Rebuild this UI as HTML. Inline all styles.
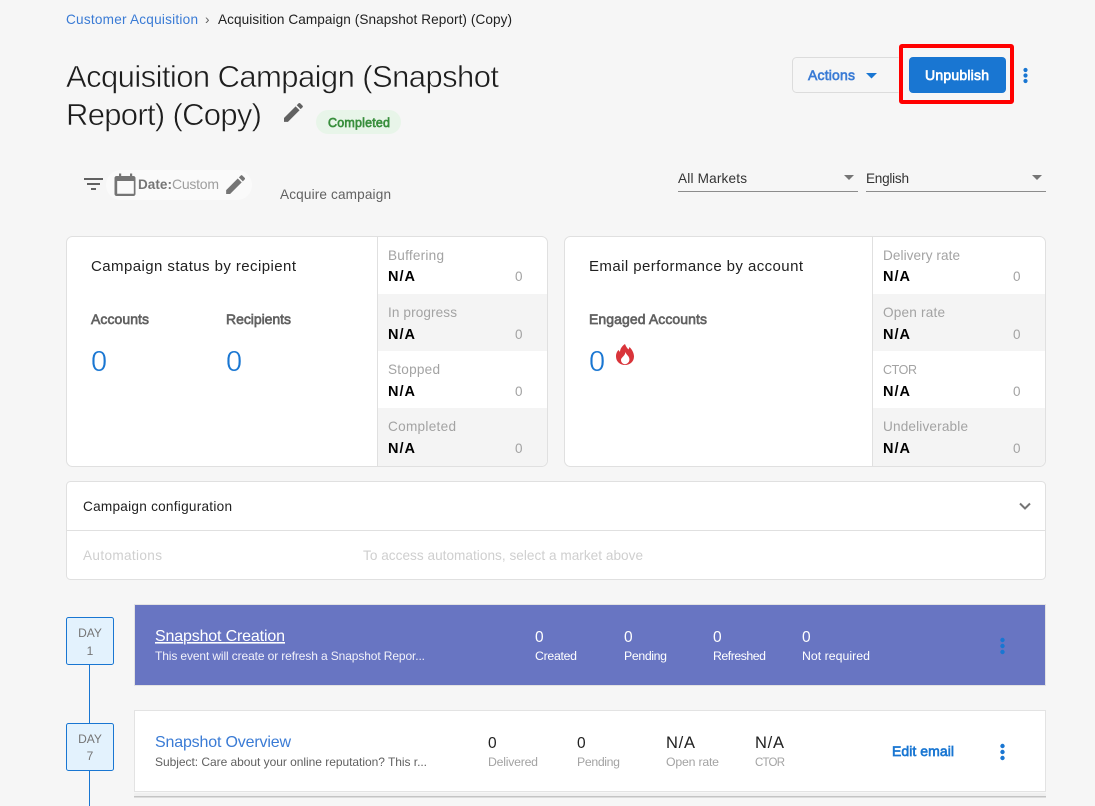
<!DOCTYPE html>
<html lang="en">
<head>
<meta charset="utf-8">
<title>Acquisition Campaign (Snapshot Report) (Copy)</title>
<style>
html,body{margin:0;padding:0;width:1095px;height:806px;overflow:hidden;background:#f6f6f6}
svg{display:block}
text{font-family:"Liberation Sans",Arial,sans-serif;font-size:13.6px;white-space:pre}
.b{font-weight:700}
.semi{stroke-width:.65px}
.title{font-size:31px;fill:#1d1d1d;stroke:#f6f6f6;stroke-width:.55px}
.lab{fill:#a3a3a3;font-size:13.6px}
.na{fill:#000;font-weight:700;font-size:14.5px}
.zero{fill:#a3a3a3;font-size:13.5px}
.big{fill:#1976d2;font-size:29px;stroke:#fff;stroke-width:.4px}
.num{font-size:15.5px}
.sm{font-size:12.3px}
</style>
</head>
<body>
<svg width="1095" height="806" viewBox="0 0 1095 806" xmlns="http://www.w3.org/2000/svg">
<rect width="1095" height="806" fill="#f6f6f6"/>

<!-- breadcrumb -->
<text x="66" y="24" fill="#3a7bd5" textLength="132">Customer Acquisition</text>
<text x="205" y="24" fill="#616161">›</text>
<text x="218" y="24" fill="#212121" textLength="294">Acquisition Campaign (Snapshot Report) (Copy)</text>

<!-- title -->
<text x="66" y="87" class="title" textLength="433">Acquisition Campaign (Snapshot</text>
<text x="66" y="125" class="title" textLength="196">Report) (Copy)</text>
<path transform="translate(280.850 99.850) scale(1.050)" fill="#616161" d="M3 17.250V21h3.750L17.810 9.940l-3.750-3.750L3 17.250zM20.710 7.040c.39-.39.39-1.020 0-1.410l-2.340-2.340c-.39-.39-1.020-.39-1.410 0l-1.830 1.830 3.750 3.750 1.830-1.830z"/>
<rect x="316" y="110" width="85" height="24" rx="12" fill="#e8f5e9"/>
<text x="328" y="127" class="semi" fill="#388e3c" stroke="#388e3c" style="font-size:12.500px" textLength="62">Completed</text>

<!-- filter row -->
<rect x="84" y="178" width="19" height="2" fill="#616161"/>
<rect x="87" y="183" width="13" height="2" fill="#616161"/>
<rect x="91" y="188" width="5" height="2" fill="#616161"/>
<rect x="106" y="170" width="146" height="30" rx="15" fill="#fafafa"/>
<path fill="#757575" fill-rule="evenodd" d="M119 173.500h2.200v2.500h8.800v-2.500h2.200v2.500h1.300c1.100 0 2 .9 2 2V194c0 1.100-.9 2-2 2h-17c-1.100 0-2-.9-2-2v-16c0-1.100.9-2 2-2h2.500zM117.200 181v12.800h16.600V181z"/>
<text x="138" y="189" class="b" fill="#757575" style="font-size:13.500px" textLength="34">Date:</text>
<text x="172" y="189" fill="#9e9e9e" style="font-size:14px" textLength="47">Custom</text>
<path transform="translate(223 172) scale(1.050)" fill="#757575" d="M3 17.250V21h3.750L17.810 9.940l-3.750-3.750L3 17.250zM20.710 7.040c.39-.39.39-1.020 0-1.410l-2.340-2.340c-.39-.39-1.020-.39-1.410 0l-1.830 1.830 3.750 3.750 1.830-1.830z"/>
<text x="280" y="199" fill="#616161" textLength="111">Acquire campaign</text>

<!-- header actions -->
<path d="M898.500 57.500H796.500a4 4 0 0 0-4 4v27a4 4 0 0 0 4 4H898.500" fill="#f6f6f6" stroke="#dcdcdc"/>
<text x="808" y="80" class="semi" fill="#3a7bd5" stroke="#3a7bd5" style="font-size:14px" textLength="47">Actions</text>
<path d="M866 73h11l-5.500 5.500z" fill="#1976d2"/>
<rect x="901" y="46" width="111" height="56" fill="none" stroke="#ff0000" stroke-width="4" rx="1"/>
<rect x="909" y="57" width="97" height="36" rx="4" fill="#1976d2"/>
<text x="925" y="80" class="semi" fill="#fff" stroke="#fff" style="font-size:14px" textLength="64">Unpublish</text>
<circle cx="1025.500" cy="70" r="2.100" fill="#1976d2"/>
<circle cx="1025.500" cy="75.500" r="2.100" fill="#1976d2"/>
<circle cx="1025.500" cy="81" r="2.100" fill="#1976d2"/>

<!-- selects -->
<text x="678" y="183" fill="#333" textLength="69">All Markets</text>
<path d="M844 175h10l-5 5z" fill="#757575"/>
<rect x="678" y="191" width="180" height="1" fill="#8c8c8c"/>
<text x="866" y="183" fill="#333" textLength="43">English</text>
<path d="M1032 175h10l-5 5z" fill="#757575"/>
<rect x="866" y="191" width="180" height="1" fill="#8c8c8c"/>

<!-- card 1 -->
<rect x="66.500" y="236.500" width="481" height="230" rx="6" fill="#fff" stroke="#e0e0e0"/>
<rect x="378" y="294" width="169" height="57" fill="#f4f4f4"/>
<path d="M378 408h169v52a6 6 0 0 1-6 6H378z" fill="#f4f4f4"/>
<rect x="377" y="237" width="1" height="229" fill="#e0e0e0"/>
<text x="91" y="271" fill="#212121" style="font-size:15px" textLength="205">Campaign status by recipient</text>
<text x="91" y="324" class="semi" fill="#616161" stroke="#616161" style="font-size:14px" textLength="58">Accounts</text>
<text x="226" y="324" class="semi" fill="#616161" stroke="#616161" style="font-size:14px" textLength="65">Recipients</text>
<text x="91" y="371" class="big">0</text>
<text x="226" y="371" class="big">0</text>

<text x="388" y="260" class="lab" textLength="56">Buffering</text>
<text x="388" y="281" class="na" textLength="27">N/A</text>
<text x="515" y="281" class="zero">0</text>
<text x="388" y="317" class="lab" textLength="69">In progress</text>
<text x="388" y="339" class="na" textLength="27">N/A</text>
<text x="515" y="339" class="zero">0</text>
<text x="388" y="374" class="lab" textLength="52">Stopped</text>
<text x="388" y="396" class="na" textLength="27">N/A</text>
<text x="515" y="396" class="zero">0</text>
<text x="388" y="431" class="lab" textLength="68">Completed</text>
<text x="388" y="453" class="na" textLength="27">N/A</text>
<text x="515" y="453" class="zero">0</text>

<!-- card 2 -->
<rect x="564.500" y="236.500" width="481" height="230" rx="6" fill="#fff" stroke="#e0e0e0"/>
<rect x="873" y="294" width="172" height="57" fill="#f4f4f4"/>
<path d="M873 408h172v52a6 6 0 0 1-6 6H873z" fill="#f4f4f4"/>
<rect x="872" y="237" width="1" height="229" fill="#e0e0e0"/>
<text x="589" y="271" fill="#212121" style="font-size:15px" textLength="214">Email performance by account</text>
<text x="589" y="324" class="semi" fill="#616161" stroke="#616161" style="font-size:14px" textLength="118">Engaged Accounts</text>
<text x="589" y="371" class="big">0</text>
<path fill="#d9343a" d="M625 344c1 2.500 2 4 3.500 5.500l1-2.500c2.500 2.500 4.500 6 4.500 9.500 0 5-4 8.500-9 8.500s-9-3.500-9-8.500c0-3 1-5 2.500-6.500l1.500 2c0-3 2-6 5-8z"/>
<path fill="#fff" d="M625.500 352c.5 2 2 3 3 4.500 1 1.500 1.200 3.500.5 5-.8 1.500-2.500 2.700-4 2.700-2 0-4-1.700-4-4.200 0-2 2-3 3-4.500.8-1 1.200-2 1.500-3.500z"/>

<text x="883" y="260" class="lab" textLength="77">Delivery rate</text>
<text x="883" y="281" class="na" textLength="27">N/A</text>
<text x="1013" y="281" class="zero">0</text>
<text x="883" y="317" class="lab" textLength="62">Open rate</text>
<text x="883" y="339" class="na" textLength="27">N/A</text>
<text x="1013" y="339" class="zero">0</text>
<text x="883" y="374" class="lab" style="font-size:12.500px" textLength="34">CTOR</text>
<text x="883" y="396" class="na" textLength="27">N/A</text>
<text x="1013" y="396" class="zero">0</text>
<text x="883" y="431" class="lab" textLength="85">Undeliverable</text>
<text x="883" y="453" class="na" textLength="27">N/A</text>
<text x="1013" y="453" class="zero">0</text>

<!-- config -->
<rect x="66.500" y="481.500" width="979" height="98" rx="4" fill="#fff" stroke="#e0e0e0"/>
<rect x="67" y="530" width="978" height="1" fill="#e0e0e0"/>
<text x="83" y="511" fill="#212121" textLength="149">Campaign configuration</text>
<path d="M1020 503.500l5 5 5-5" fill="none" stroke="#757575" stroke-width="2"/>
<text x="83" y="560" fill="#cfcfcf" textLength="79">Automations</text>
<text x="363" y="560" fill="#cfcfcf" textLength="280">To access automations, select a market above</text>

<!-- timeline -->
<rect x="89" y="665" width="1" height="58" fill="#1976d2"/>
<rect x="89" y="771" width="1" height="35" fill="#1976d2"/>
<rect x="66.500" y="617.500" width="47" height="47" rx="2" fill="#e3f2fd" stroke="#1976d2"/>
<text x="90" y="637" text-anchor="middle" fill="#757575" style="font-size:12px">DAY</text>
<text x="90" y="655" text-anchor="middle" fill="#757575" style="font-size:12px">1</text>
<rect x="66.500" y="723.500" width="47" height="47" rx="2" fill="#e3f2fd" stroke="#1976d2"/>
<text x="90" y="743" text-anchor="middle" fill="#757575" style="font-size:12px">DAY</text>
<text x="90" y="760" text-anchor="middle" fill="#757575" style="font-size:12px">7</text>

<!-- event 1 -->
<rect x="134.500" y="604.500" width="911" height="81" fill="#6875c2" stroke="#e3e3e3"/>
<text x="155" y="641" fill="#fff" style="font-size:16px;text-decoration:underline" textLength="130">Snapshot Creation</text>
<text x="155" y="660" fill="#f1f1fa" style="font-size:12px" textLength="270">This event will create or refresh a Snapshot Repor...</text>
<text x="535" y="642" fill="#fff" class="num">0</text>
<text x="535" y="660" fill="#fff" class="sm" textLength="42">Created</text>
<text x="624" y="642" fill="#fff" class="num">0</text>
<text x="624" y="660" fill="#fff" class="sm" textLength="43">Pending</text>
<text x="713" y="642" fill="#fff" class="num">0</text>
<text x="713" y="660" fill="#fff" class="sm" textLength="53">Refreshed</text>
<text x="802" y="642" fill="#fff" class="num">0</text>
<text x="802" y="660" fill="#fff" class="sm" textLength="68">Not required</text>
<circle cx="1002.500" cy="640" r="2.200" fill="#1976d2"/>
<circle cx="1002.500" cy="646" r="2.200" fill="#1976d2"/>
<circle cx="1002.500" cy="652" r="2.200" fill="#1976d2"/>

<!-- event 2 -->
<rect x="134" y="793" width="912" height="4" rx="1" fill="#f0f0f0"/>
<rect x="134" y="796" width="912" height="1.500" fill="#c4c4c4"/>
<rect x="134.500" y="710.500" width="911" height="81" fill="#fff" stroke="#e3e3e3"/>
<text x="155" y="747" fill="#3a7bd5" style="font-size:16px" textLength="136">Snapshot Overview</text>
<text x="155" y="766" fill="#616161" style="font-size:12px" textLength="272">Subject: Care about your online reputation? This r...</text>
<text x="488" y="748" fill="#212121" class="num">0</text>
<text x="488" y="766" fill="#a3a3a3" class="sm" textLength="50">Delivered</text>
<text x="577" y="748" fill="#212121" class="num">0</text>
<text x="577" y="766" fill="#a3a3a3" class="sm" textLength="43">Pending</text>
<text x="666" y="748" fill="#212121" style="font-size:16.500px" textLength="29">N/A</text>
<text x="666" y="766" fill="#a3a3a3" class="sm" textLength="53">Open rate</text>
<text x="755" y="748" fill="#212121" style="font-size:16.500px" textLength="29">N/A</text>
<text x="755" y="766" fill="#a3a3a3" style="font-size:11.500px" textLength="30">CTOR</text>
<text x="892" y="756" class="semi" fill="#1976d2" stroke="#1976d2" style="font-size:14px" textLength="62">Edit email</text>
<circle cx="1002.500" cy="746" r="2.200" fill="#1976d2"/>
<circle cx="1002.500" cy="752" r="2.200" fill="#1976d2"/>
<circle cx="1002.500" cy="758" r="2.200" fill="#1976d2"/>
</svg>
</body>
</html>
